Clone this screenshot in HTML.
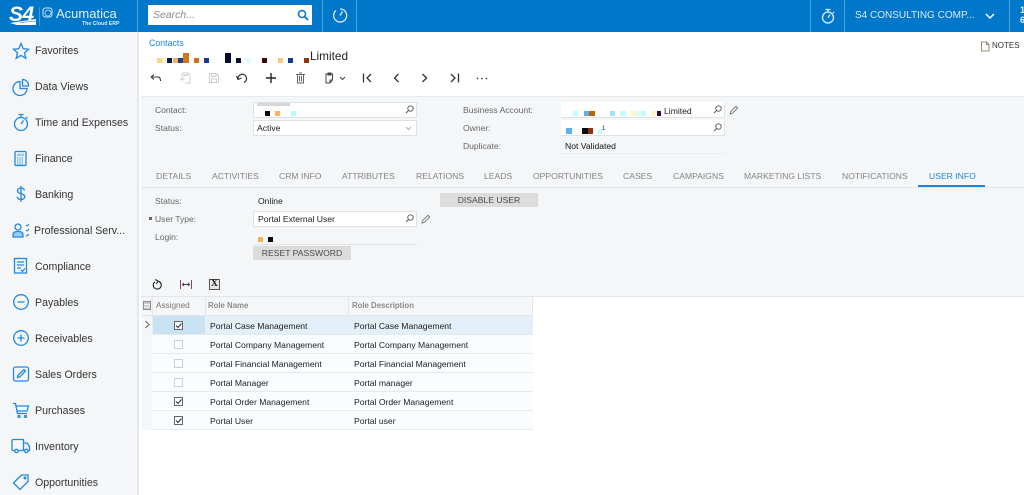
<!DOCTYPE html>
<html><head><meta charset="utf-8"><style>
html,body{margin:0;padding:0;width:1024px;height:495px;overflow:hidden;background:#fff;font-family:"Liberation Sans",sans-serif}
#p{position:absolute;left:0;top:0;width:1024px;height:495px;overflow:hidden;filter:blur(.3px)}
.a{position:absolute}
.t{position:absolute;white-space:nowrap;line-height:12px}
.n{font-size:10.6px;color:#333;left:35px}
.l{font-size:8.55px;color:#666}
.v{font-size:8.6px;color:#1c1c1c}
.tab{font-size:8.6px;color:#858585;top:169.500px}
.g{font-size:8.6px;color:#1c1c1c}
.h{font-size:8.2px;color:#777}
.inp{position:absolute;background:#fff;border:1px solid #dfe2e5;box-sizing:border-box}
.r{position:absolute;left:142px;width:391px;height:19px;border-bottom:1px solid #e6e9ec;box-sizing:border-box;background:#fafdff}
.btn{position:absolute;background:#dcdcdc;color:#4a4a4a;font-size:8.6px;text-align:center}
.s{position:absolute}
svg{position:absolute;overflow:visible}
.ni{fill:none;stroke:#2189e0;stroke-width:1.3}
.tb{fill:none;stroke:#333;stroke-width:1.1}
.cb{position:absolute;left:174px;width:9px;height:9px;box-sizing:border-box;border:1px solid #cfcfcf;background:#fff}
.cb.c{border-color:#666}
</style></head><body><div id="p">
<!-- top bar -->
<div class="a" style="left:0;top:0;width:1024px;height:32px;background:#0077c8"></div>
<div class="a" style="left:137px;top:0;width:1px;height:32px;background:#4fa3dc"></div>
<div class="a" style="left:322px;top:0;width:1px;height:32px;background:#4fa3dc"></div>
<div class="a" style="left:356px;top:0;width:1px;height:32px;background:#4fa3dc"></div>
<div class="a" style="left:810px;top:0;width:1px;height:32px;background:#4fa3dc"></div>
<div class="a" style="left:844px;top:0;width:1px;height:32px;background:#4fa3dc"></div>
<div class="a" style="left:1009px;top:0;width:1px;height:32px;background:#4fa3dc"></div>
<!-- logo -->
<div class="t" style="left:9px;top:5px;font-size:21px;line-height:20px;font-weight:bold;font-style:italic;color:#fff;letter-spacing:-.5px">S4</div>
<svg style="left:0;top:0" width="130" height="32"><path d="M10 23 L36 19 L36 25 L17 25 Z" fill="#fff"/><path d="M20 22.500L36 21" stroke="#0077c8" stroke-width=".6"/><path d="M39.500 7V26" stroke="#5aa9e0" stroke-width=".7"/><rect x="43" y="8" width="9" height="9" rx="2.500" fill="none" stroke="#cfe6f6" stroke-width="1"/><circle cx="48" cy="13" r="3" fill="none" stroke="#cfe6f6" stroke-width=".8"/></svg>
<div class="t" style="left:56px;top:6px;font-size:13px;line-height:16px;color:#e4f1fa">Acumatica</div>
<div class="t" style="left:82px;top:21px;font-size:5.200px;line-height:6px;color:#d9ecf8;font-weight:bold">The Cloud ERP</div>
<!-- search -->
<div class="a" style="left:148px;top:5px;width:164px;height:20px;background:#fff"></div>
<div class="t" style="left:153px;top:9px;font-size:10.500px;font-style:italic;color:#8a8a8a">Search...</div>
<svg style="left:297px;top:9px" width="13" height="13"><circle cx="5" cy="5" r="3.500" fill="none" stroke="#0077c8" stroke-width="1.500"/><path d="M7.500 7.500L11 11" stroke="#0077c8" stroke-width="1.800"/></svg>
<svg style="left:332px;top:7px" width="16" height="17" fill="none" stroke="#dcedf8" stroke-width="1.300"><path d="M4 3.500A6.500 6.500 0 1 0 8 2"/><path d="M8 8.500L10.500 4.500"/></svg>
<svg style="left:820px;top:8px" width="16" height="17" fill="none" stroke="#dcedf8" stroke-width="1.300"><circle cx="8" cy="9.500" r="5.500"/><path d="M5.500 1.500H10.500M8 1.500V4M8 9.500L10 6.500M13 4L14 5"/></svg>
<div class="t" style="left:855px;top:10px;font-size:10px;color:#d8ebf8">S4 CONSULTING COMP...</div>
<svg style="left:985px;top:13px" width="10" height="7"><path d="M1 1L5 5L9 1" fill="none" stroke="#fff" stroke-width="1.500"/></svg>
<div class="t" style="left:1020px;top:5px;font-size:9px;font-weight:bold;color:#e4f1fa;line-height:10px">1<br>6</div>
<!-- sidebar -->
<div class="a" style="left:0;top:32px;width:137px;height:463px;background:#f4f6f8"></div>
<div class="a" style="left:137px;top:32px;width:1.500px;height:463px;background:#e4e8ec"></div>
<div class="t n" style="top:45px">Favorites</div>
<div class="t n" style="top:81px">Data Views</div>
<div class="t n" style="top:117px">Time and Expenses</div>
<div class="t n" style="top:153px">Finance</div>
<div class="t n" style="top:189px">Banking</div>
<div class="t n" style="top:225px;left:34px">Professional Serv...</div>
<div class="t n" style="top:261px">Compliance</div>
<div class="t n" style="top:297px">Payables</div>
<div class="t n" style="top:333px">Receivables</div>
<div class="t n" style="top:369px">Sales Orders</div>
<div class="t n" style="top:405px">Purchases</div>
<div class="t n" style="top:441px">Inventory</div>
<div class="t n" style="top:477px">Opportunities</div>
<svg style="left:12px;top:42px" width="18" height="18" class="ni"><path d="M9 1.500L11.200 6.700L16.500 7.200L12.500 10.800L13.800 16.300L9 13.400L4.200 16.300L5.500 10.800L1.500 7.200L6.800 6.700Z"/></svg>
<svg style="left:12px;top:78px" width="18" height="18" class="ni"><path d="M8 3.500A7 7 0 1 0 15 10.500H8Z"/><path d="M10.500 1.500A6 6 0 0 1 16.500 8H10.500Z"/></svg>
<svg style="left:12px;top:113px" width="18" height="19" class="ni"><circle cx="9" cy="11" r="6.500"/><path d="M6.500 1.500H11.500M9 1.500V4.500M9 11L11.500 7.500M14 4L15.500 5.500"/></svg>
<svg style="left:13px;top:150px" width="16" height="17" class="ni"><rect x="2" y="1.500" width="11" height="14" rx="1"/><rect x="4" y="3.500" width="7" height="2.500" fill="#9ccbee" stroke="none"/><path d="M4 8H11M4 10H11M4 12H11M4 14H11" stroke-width="1" stroke-dasharray="1.300 1"/></svg>
<svg style="left:14px;top:185px" width="14" height="18" class="ni"><path d="M10.500 5.500C10 3.500 8.500 3 7 3C5 3 3.500 4 3.500 5.700C3.500 9.500 10.800 7.800 10.800 11.800C10.800 13.500 9 14.500 7 14.500C5 14.500 3.500 13.500 3.200 11.800M7 1V17"/></svg>
<svg style="left:11px;top:222px" width="19" height="18" class="ni"><circle cx="7" cy="5" r="3"/><path d="M2 15V12.500C2 10.500 4 9.500 7 9.500C10 9.500 12 10.500 12 12.500V15Z" fill="#9ccbee"/><path d="M15 3L16 4L18 2M15 8L16 9L18 7M15 13L16 14L18 12" stroke-width="1"/></svg>
<svg style="left:13px;top:257px" width="16" height="18" class="ni"><rect x="1.500" y="1.500" width="12" height="14.500"/><path d="M4 5H11M4 8H11M4 11H8M8 13L9.500 14.500L12 11.500"/></svg>
<svg style="left:12px;top:293px" width="18" height="18" class="ni"><circle cx="9" cy="9" r="7.300"/><path d="M5.500 9H12.500"/></svg>
<svg style="left:12px;top:329px" width="18" height="18" class="ni"><circle cx="9" cy="9" r="7.300"/><path d="M5.500 9H12.500M9 5.500V12.500"/></svg>
<svg style="left:12px;top:365px" width="18" height="18" class="ni"><rect x="1.500" y="2" width="15" height="14" rx="2"/><path d="M5.500 12.500L6.200 10L12 4.500L13.500 6L8 11.800Z"/></svg>
<svg style="left:12px;top:402px" width="18" height="17" class="ni"><path d="M1 1.500H3.500L5.500 11.500H15M4 4H16.500L15 9H5"/><circle cx="7" cy="14.500" r="1"/><circle cx="13.500" cy="14.500" r="1"/></svg>
<svg style="left:11px;top:438px" width="20" height="16" class="ni"><path d="M3.500 12.500H2C1.500 12.500 1 12 1 11.500V2.500C1 2 1.500 1.500 2 1.500H12.500V12.500H7.500M12.500 5H16L18.500 8.500V12.500H17M12.500 12.500H13.500"/><circle cx="5.500" cy="13" r="1.700"/><circle cx="15.300" cy="13" r="1.700"/></svg>
<svg style="left:12px;top:473px" width="18" height="18" class="ni"><path d="M1.500 10L9.500 2H16V8.500L8 16.500Z"/><circle cx="13" cy="5" r=".8"/></svg>
<!-- header -->
<div class="t" style="left:149px;top:37px;font-size:8.800px;color:#1f86d6">Contacts</div>
<div class="t" style="left:310px;top:50px;font-size:11.800px;color:#222">Limited</div>
<div class="s" style="left:157px;top:58px;width:5px;height:5px;background:#fbd38d"></div>
<div class="s" style="left:162px;top:58px;width:4px;height:5px;background:#fff3c9"></div>
<div class="s" style="left:167px;top:58px;width:5px;height:5px;background:#0d1a50"></div>
<div class="s" style="left:173px;top:58px;width:5px;height:5px;background:#f5b06a"></div>
<div class="s" style="left:178px;top:58px;width:5px;height:5px;background:#1c3f8c"></div>
<div class="s" style="left:183px;top:53px;width:6px;height:10px;background:#d0761e"></div>
<div class="s" style="left:194px;top:58px;width:5px;height:5px;background:#cf7518"></div>
<div class="s" style="left:204px;top:58px;width:5px;height:5px;background:#183a92"></div>
<div class="s" style="left:225px;top:53px;width:6px;height:10px;background:#050a30"></div>
<div class="s" style="left:236px;top:58px;width:5px;height:5px;background:#0a0f38"></div>
<div class="s" style="left:246px;top:58px;width:5px;height:5px;background:#dcfbfb"></div>
<div class="s" style="left:262px;top:58px;width:5px;height:5px;background:#3a0808"></div>
<div class="s" style="left:278px;top:58px;width:5px;height:5px;background:#fbc97c"></div>
<div class="s" style="left:288px;top:58px;width:5px;height:5px;background:#163a90"></div>
<div class="s" style="left:304px;top:58px;width:5px;height:5px;background:#96350c"></div>
<svg style="left:980px;top:41px" width="10" height="11"><path d="M1.500 1H6.500L9 3.500V10H1.500Z M6.500 1V3.500H9" fill="#fff" stroke="#7a6a50" stroke-width=".8"/></svg>
<div class="t" style="left:992px;top:40px;font-size:8px;color:#333">NOTES</div>
<!-- toolbar -->
<svg style="left:150px;top:72px" width="12" height="12" class="tb"><path d="M1 5H8C10 5 10.500 7 10.500 9M1 5L4 2.500M1 5L4 7.500"/></svg>
<svg style="left:179px;top:72px" width="12" height="12" fill="none" stroke="#cfcfcf" stroke-width="1"><path d="M3 1H9L11 3V11H6M3 1V5M5 1V3.500H8.500V1M1 7H5L3.500 5.500M1 7L3.500 8.500"/></svg>
<svg style="left:208px;top:72px" width="12" height="12" fill="none" stroke="#cfcfcf" stroke-width="1"><path d="M1.500 1.500H8.500L10.500 3.500V10.500H1.500ZM3.500 1.500V4.500H8V1.500M3.500 10.500V7H8.500V10.500"/></svg>
<svg style="left:236px;top:72px" width="13" height="12" class="tb"><path d="M2 7A4.300 4.300 0 1 1 8 10.500M.5 4L2 7.500L5.500 6" stroke-width="1.200"/></svg>
<svg style="left:265px;top:72px" width="12" height="12"><path d="M6 1V11M1 6H11" stroke="#222" stroke-width="1.400"/></svg>
<svg style="left:295px;top:72px" width="11" height="12" fill="none" stroke="#666" stroke-width="1"><path d="M1 2.500H10M2.500 2.500V11H8.500V2.500M4 1H7M4.500 4V9.500M6.500 4V9.500"/></svg>
<svg style="left:324px;top:72px" width="11" height="12" fill="none" stroke="#444" stroke-width="1"><path d="M3 2H8.500V8L6 11H2V2H3M4 1H7V3H4ZM8.500 8H6V11"/></svg>
<svg style="left:339px;top:76px" width="7" height="5"><path d="M1 1L3.500 3.500L6 1" fill="none" stroke="#444" stroke-width="1"/></svg>
<svg style="left:362px;top:73px" width="11" height="10" class="tb"><path d="M1.500 0.500V9.500M9 1L5 5L9 9" stroke-width="1.300"/></svg>
<svg style="left:392px;top:73px" width="8" height="10" class="tb"><path d="M6.500 1L2.500 5L6.500 9" stroke-width="1.300"/></svg>
<svg style="left:421px;top:73px" width="8" height="10" class="tb"><path d="M1.500 1L5.500 5L1.500 9" stroke-width="1.300"/></svg>
<svg style="left:449px;top:73px" width="11" height="10" class="tb"><path d="M9.500 0.500V9.500M2 1L6 5L2 9" stroke-width="1.300"/></svg>
<svg style="left:476px;top:77px" width="12" height="3"><circle cx="1.500" cy="1.500" r=".9" fill="#444"/><circle cx="6" cy="1.500" r=".9" fill="#444"/><circle cx="10.500" cy="1.500" r=".9" fill="#444"/></svg>
<!-- form bg -->
<div class="a" style="left:141px;top:96px;width:883px;height:201px;background:#f4f6f8;border-top:1px solid #e8eaed;border-bottom:1px solid #e4e6e9;box-sizing:border-box"></div>
<div class="t l" style="left:155px;top:103.500px">Contact:</div>
<div class="t l" style="left:155px;top:121.500px">Status:</div>
<div class="inp" style="left:253px;top:102px;width:164px;height:16px"></div>
<div class="s" style="left:257px;top:103px;width:33px;height:3px;background:#d6d6d6"></div>
<div class="s" style="left:265px;top:111px;width:5px;height:5px;background:#0a0a0a"></div>
<div class="s" style="left:275px;top:111px;width:5px;height:5px;background:#fdb46a"></div>
<div class="s" style="left:291px;top:111px;width:5px;height:5px;background:#b9fbfb"></div>
<svg style="left:405px;top:105px" width="9" height="9"><circle cx="5.500" cy="3.500" r="2.700" fill="none" stroke="#555" stroke-width=".9"/><path d="M3.500 5.500L1 8" stroke="#555" stroke-width="1"/></svg>
<div class="inp" style="left:253px;top:120px;width:164px;height:16px"></div>
<div class="t v" style="left:257px;top:121.500px">Active</div>
<svg style="left:405px;top:126px" width="7" height="5"><path d="M1 1L3.500 3.500L6 1" fill="none" stroke="#999" stroke-width=".8"/></svg>
<div class="t l" style="left:463px;top:103.500px">Business Account:</div>
<div class="t l" style="left:463px;top:121.500px">Owner:</div>
<div class="t l" style="left:463px;top:139.500px">Duplicate:</div>
<div class="inp" style="left:561px;top:102px;width:164px;height:16px;border-left:0;border-top-color:#fff"></div>
<div class="s" style="left:573px;top:111px;width:5px;height:5px;background:#c4fbfb"></div>
<div class="s" style="left:584px;top:111px;width:5px;height:5px;background:#62adee"></div>
<div class="s" style="left:589px;top:111px;width:6px;height:5px;background:#b8640f"></div>
<div class="s" style="left:610px;top:111px;width:5px;height:5px;background:#a6e0fa"></div>
<div class="s" style="left:620px;top:111px;width:6px;height:5px;background:#c4fbfb"></div>
<div class="s" style="left:631px;top:111px;width:5px;height:5px;background:#fdf8c8"></div>
<div class="s" style="left:636px;top:111px;width:5px;height:5px;background:#e0fbf4"></div>
<div class="s" style="left:641px;top:111px;width:5px;height:5px;background:#c4fbfb"></div>
<div class="s" style="left:651px;top:111px;width:6px;height:5px;background:#fdf8c8"></div>
<div class="s" style="left:657px;top:111px;width:4px;height:5px;background:#300a40"></div>
<div class="t v" style="left:664px;top:104.500px">Limited</div>
<svg style="left:713px;top:105px" width="9" height="9"><circle cx="5.500" cy="3.500" r="2.700" fill="none" stroke="#555" stroke-width=".9"/><path d="M3.500 5.500L1 8" stroke="#555" stroke-width="1"/></svg>
<svg style="left:729px;top:105px" width="10" height="10" fill="none" stroke="#777" stroke-width=".9"><path d="M1 9L1.500 6.800L7 1.300L8.700 3L3.200 8.500Z"/></svg>
<div class="inp" style="left:561px;top:120px;width:164px;height:16px;border-left:0;border-top-color:#fff"></div>
<div class="s" style="left:566px;top:128px;width:6px;height:6px;background:#5bb0f5"></div>
<div class="s" style="left:582px;top:128px;width:6px;height:6px;background:#0a0a0a"></div>
<div class="s" style="left:588px;top:128px;width:5px;height:6px;background:#8a3208"></div>
<div class="s" style="left:598px;top:129px;width:4px;height:5px;background:#c4fbfb"></div>
<div class="t" style="left:602px;top:126px;font-size:6px;line-height:7px;color:#222">1</div>
<svg style="left:713px;top:123px" width="9" height="9"><circle cx="5.500" cy="3.500" r="2.700" fill="none" stroke="#555" stroke-width=".9"/><path d="M3.500 5.500L1 8" stroke="#555" stroke-width="1"/></svg>
<div class="t v" style="left:565px;top:139.500px;color:#111">Not Validated</div>
<div class="a" style="left:561px;top:153px;width:164px;height:1px;background:#e9ebee"></div>
<!-- tabs -->
<div class="t tab" style="left:156px">DETAILS</div>
<div class="t tab" style="left:212px">ACTIVITIES</div>
<div class="t tab" style="left:279px">CRM INFO</div>
<div class="t tab" style="left:342px">ATTRIBUTES</div>
<div class="t tab" style="left:416px">RELATIONS</div>
<div class="t tab" style="left:484px">LEADS</div>
<div class="t tab" style="left:533px">OPPORTUNITIES</div>
<div class="t tab" style="left:623px">CASES</div>
<div class="t tab" style="left:673px">CAMPAIGNS</div>
<div class="t tab" style="left:744px">MARKETING LISTS</div>
<div class="t tab" style="left:842px">NOTIFICATIONS</div>
<div class="t tab" style="left:929px;color:#1f86d6">USER INFO</div>
<div class="a" style="left:141px;top:187px;width:883px;height:1px;background:#e3e5e8"></div>
<div class="a" style="left:918px;top:185px;width:67px;height:2px;background:#1f86d6"></div>
<!-- user info -->
<div class="t l" style="left:155px;top:195px">Status:</div>
<div class="t v" style="left:258px;top:195px">Online</div>
<div class="btn" style="left:440px;top:193px;width:98px;height:14px;line-height:15px">DISABLE USER</div>
<div class="s" style="left:149px;top:217px;width:3px;height:3px;background:#666"></div>
<div class="t l" style="left:155px;top:212.500px">User Type:</div>
<div class="inp" style="left:253px;top:211px;width:164px;height:16px"></div>
<div class="t v" style="left:258px;top:212.500px">Portal External User</div>
<svg style="left:405px;top:214px" width="9" height="9"><circle cx="5.500" cy="3.500" r="2.700" fill="none" stroke="#555" stroke-width=".9"/><path d="M3.500 5.500L1 8" stroke="#555" stroke-width="1"/></svg>
<svg style="left:421px;top:214px" width="10" height="10" fill="none" stroke="#777" stroke-width=".9"><path d="M1 9L1.500 6.800L7 1.300L8.700 3L3.200 8.500Z"/></svg>
<div class="t l" style="left:155px;top:230.500px">Login:</div>
<div class="s" style="left:258px;top:237px;width:5px;height:5px;background:#f8b058"></div>
<div class="s" style="left:268px;top:237px;width:5px;height:5px;background:#0a0a0a"></div>
<div class="a" style="left:253px;top:244px;width:164px;height:1px;background:#e0e2e5"></div>
<div class="btn" style="left:253px;top:246px;width:98px;height:14px;line-height:15px">RESET PASSWORD</div>
<svg style="left:152px;top:279px" width="10" height="11" fill="none" stroke="#222" stroke-width="1.100"><path d="M6.500 2.300A4 4 0 1 1 3 2.800M3.200 .5L6.300 2.300L4.200 4.800"/></svg>
<svg style="left:180px;top:279px" width="12" height="11" fill="none" stroke="#7a4a5a" stroke-width="1"><path d="M.500 1V10M11.500 1V10"/><path d="M2.500 5.500H9.500M4 4L2.500 5.500L4 7M8 4L9.500 5.500L8 7" stroke="#445"/></svg>
<svg style="left:209px;top:279px" width="11" height="11"><rect x=".5" y=".5" width="10" height="10" fill="#e8e8e8" stroke="#555"/></svg>
<div class="t" style="left:211px;top:279px;font-family:'Liberation Serif',serif;font-weight:bold;font-size:9.500px;line-height:11px;color:#111">X</div>
<!-- grid -->
<div class="a" style="left:141px;top:297px;width:392px;height:19px;background:#f4f6f8;border-bottom:1px solid #e4e6e9;box-sizing:border-box"></div>
<div class="a" style="left:152px;top:297px;width:1px;height:134px;background:#e6e8eb"></div>
<div class="a" style="left:205px;top:297px;width:1px;height:19px;background:#e4e6e9"></div>
<div class="a" style="left:348px;top:297px;width:1px;height:19px;background:#e4e6e9"></div>
<div class="a" style="left:532px;top:297px;width:1px;height:19px;background:#e4e6e9"></div>
<svg style="left:143px;top:301px" width="8" height="9"><rect x=".5" y=".5" width="7" height="8" fill="#ccc" stroke="#777" stroke-width=".8"/><path d="M1 3.500H7M1 6H7" stroke="#fff" stroke-width=".8"/></svg>
<div class="t h" style="left:156px;top:300px">Assigned</div>
<div class="t h" style="left:208px;top:300px;font-weight:bold;color:#8a8a8a;font-size:7.800px">Role Name</div>
<div class="t h" style="left:352px;top:300px;font-weight:bold;color:#8a8a8a;font-size:7.800px">Role Description</div>
<div class="r" style="top:316px;background:#e3f0f9;left:152px;width:381px"></div>
<div class="a" style="left:153px;top:316px;width:52px;height:18px;background:#c9e2f4"></div>
<div class="r" style="top:335px"></div>
<div class="r" style="top:354px"></div>
<div class="r" style="top:373px"></div>
<div class="r" style="top:392px"></div>
<div class="r" style="top:411px"></div>
<div class="a" style="left:142px;top:316px;width:10px;height:114px;background:#f4f6f8"></div>
<svg style="left:144px;top:320px" width="7" height="9"><path d="M1.500 1L5 4.500L1.500 8" fill="none" stroke="#666" stroke-width="1"/></svg>
<div class="cb c" style="top:321px"></div>
<div class="cb" style="top:340px"></div>
<div class="cb" style="top:359px"></div>
<div class="cb" style="top:378px"></div>
<div class="cb c" style="top:397px"></div>
<div class="cb c" style="top:416px"></div>
<svg style="left:174px;top:321px" width="9" height="9"><path d="M2 4.500L4 6.500L7.500 2.500" fill="none" stroke="#333" stroke-width="1.100"/></svg>
<svg style="left:174px;top:397px" width="9" height="9"><path d="M2 4.500L4 6.500L7.500 2.500" fill="none" stroke="#333" stroke-width="1.100"/></svg>
<svg style="left:174px;top:416px" width="9" height="9"><path d="M2 4.500L4 6.500L7.500 2.500" fill="none" stroke="#333" stroke-width="1.100"/></svg>
<div class="t g" style="left:210px;top:319.500px">Portal Case Management</div><div class="t g" style="left:354px;top:319.500px">Portal Case Management</div>
<div class="t g" style="left:210px;top:338.500px">Portal Company Management</div><div class="t g" style="left:354px;top:338.500px">Portal Company Management</div>
<div class="t g" style="left:210px;top:357.500px">Portal Financial Management</div><div class="t g" style="left:354px;top:357.500px">Portal Financial Management</div>
<div class="t g" style="left:210px;top:376.500px">Portal Manager</div><div class="t g" style="left:354px;top:376.500px">Portal manager</div>
<div class="t g" style="left:210px;top:395.500px">Portal Order Management</div><div class="t g" style="left:354px;top:395.500px">Portal Order Management</div>
<div class="t g" style="left:210px;top:414.500px">Portal User</div><div class="t g" style="left:354px;top:414.500px">Portal user</div>
</div></body></html>
